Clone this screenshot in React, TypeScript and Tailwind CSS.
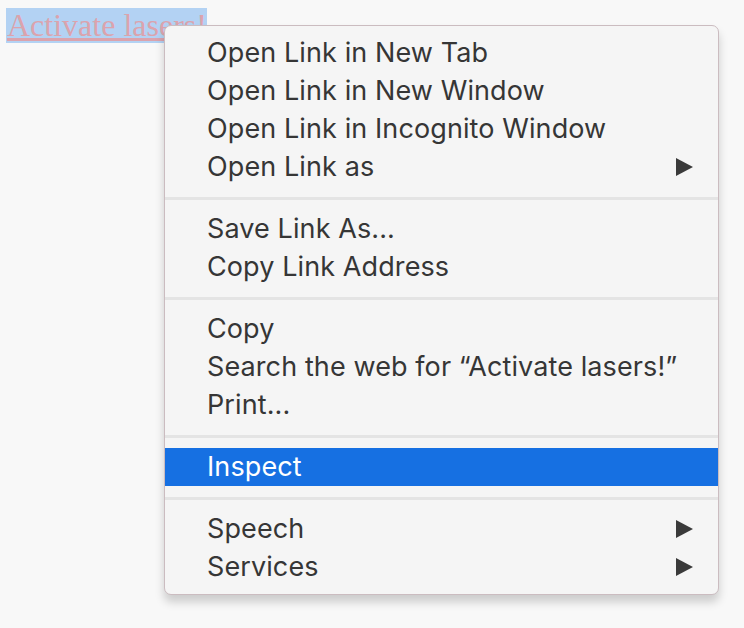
import React from "react";

type Entry = { label?: string; sub?: boolean; active?: boolean; sep?: boolean };

const entries: Entry[] = [
  { label: "Open Link in New Tab" },
  { label: "Open Link in New Window" },
  { label: "Open Link in Incognito Window" },
  { label: "Open Link as", sub: true },
  { sep: true },
  { label: "Save Link As..." },
  { label: "Copy Link Address" },
  { sep: true },
  { label: "Copy" },
  { label: "Search the web for \u201cActivate lasers!\u201d" },
  { label: "Print..." },
  { sep: true },
  { label: "Inspect", active: true },
  { sep: true },
  { label: "Speech", sub: true },
  { label: "Services", sub: true },
];

const Arrow = () => (
  <svg width="17" height="18" viewBox="0 0 17 18" className="shrink-0">
    <polygon points="0,0 17,9 0,18" fill="#3a3a3a" />
  </svg>
);

const App: React.FC = () => {
  return (
    <div className="relative w-[744px] h-[628px] bg-[#f8f8f8] overflow-hidden">
      <div className="pt-[8px] pl-[6px]">
        <a
          href="#"
          className="inline-block bg-[#b3d2f3] text-[#dba3ad] underline text-[32px] leading-[35px] pl-[1px]"
          style={{ fontFamily: '"Liberation Serif", "Times New Roman", serif' }}
        >
          Activate lasers!
        </a>
      </div>

      {/* context menu */}
      <div
        className="absolute left-[164px] top-[25px] w-[555px] h-[570px] rounded-[7px] border border-[#cbbcc0] bg-[#f5f5f5] pt-[8px] shadow-[0_7px_10px_rgba(0,0,0,0.18)]"
        style={{ fontFamily: 'Inter, "Noto Sans", sans-serif' }}
      >
        {entries.map((e, i) =>
          e.sep ? (
            <div key={i} className="h-[24px] flex items-center">
              <div className="w-full h-[3px] bg-[#e4e4e4]" />
            </div>
          ) : (
            <div
              key={i}
              className={`h-[38px] flex items-center justify-between pl-[42px] pr-[25px] text-[27px] tracking-[0.1px] ${
                e.active ? "bg-[#1670e2] text-white" : "text-[#363636]"
              }`}
            >
              <span>{e.label}</span>
              {e.sub && <Arrow />}
            </div>
          )
        )}
      </div>
    </div>
  );
};

export default App;
